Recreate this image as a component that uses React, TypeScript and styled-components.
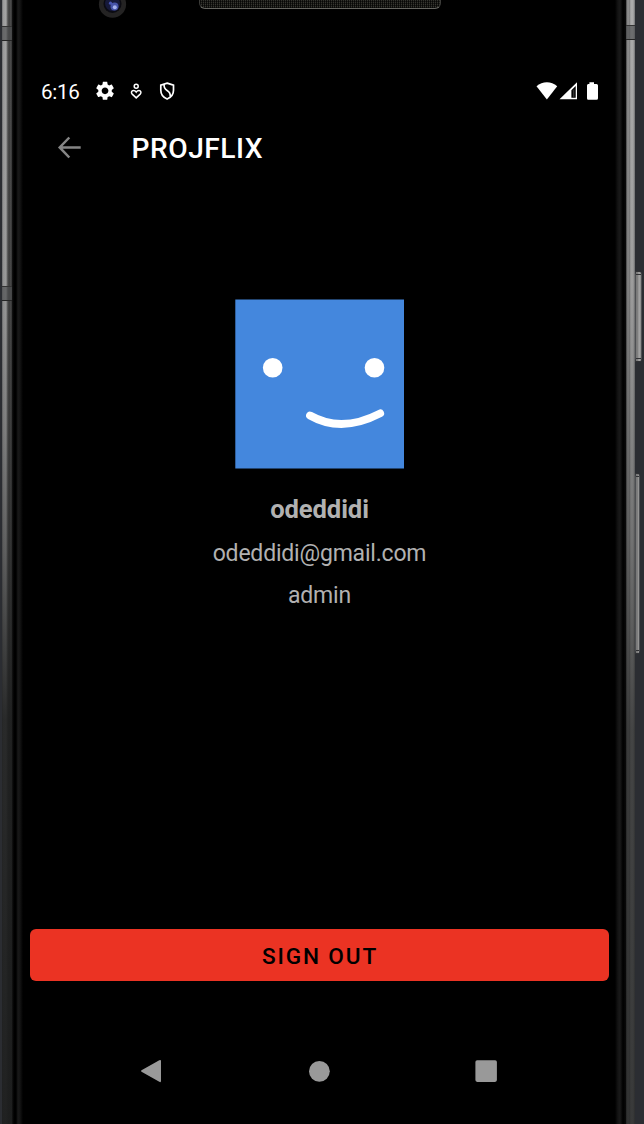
import React from 'react';
import styled, { createGlobalStyle } from 'styled-components';

const GlobalStyle = createGlobalStyle`
  * { box-sizing: border-box; }
  body { margin: 0; background: #292b2f; overflow: hidden; }
`;

const Device = styled.div`
  display: grid;
  grid-template-columns: 10px 614px 9px 9px;
  padding-left: 2px;
  width: 644px;
  height: 1124px;
  background: #2b2d32;
  font-family: Roboto, 'Noto Sans', sans-serif;
`;

const Rail = styled.div<{ $side: 'left' | 'right' }>`
  position: relative;
  background:
    ${({ $side }) =>
      $side === 'left'
        ? `linear-gradient(180deg, rgba(28, 29, 29, 0) 0%, rgba(28, 29, 29, 0.08) 25%, rgba(28, 29, 29, 0.27) 38%, rgba(28, 29, 29, 0.5) 49%, rgba(28, 29, 29, 0.72) 57%, rgba(28, 29, 29, 0.9) 64%, rgba(28, 29, 29, 0.97) 100%),
           linear-gradient(90deg, #66676a 0, #999 1px, #a6a6a6 4px, #777 5px, #4b4b4b 6px, #3d3d3d 8px, #585858 9px, #222 10px)`
        : `linear-gradient(180deg, rgba(28, 29, 29, 0) 0%, rgba(28, 29, 29, 0.1) 25%, rgba(28, 29, 29, 0.4) 48%, rgba(28, 29, 29, 0.72) 65%, rgba(28, 29, 29, 0.8) 100%),
           linear-gradient(90deg, #555 0, #606060 1px, #b0b0b0 2px, #6a6a6a 3px, #999 4px, #b1b1b1 6px, #999 8px, #66676a 9px)`};
`;

const AntennaBand = styled.i<{ $top: number }>`
  position: absolute;
  left: 0;
  right: 0;
  top: ${({ $top }) => $top}px;
  height: 15px;
  background: rgba(75, 77, 78, 0.65);
  border-top: 1px solid #333;
  border-bottom: 1px solid #252525;
`;

const Side = styled.div`
  display: flex;
  flex-direction: column;
  align-items: flex-start;
  padding-top: 271px;
`;

const HardwareKey = styled.div<{ $height: number; $width: number; $gap?: number }>`
  width: ${({ $width }) => $width}px;
  height: ${({ $height }) => $height}px;
  margin-top: ${({ $gap = 0 }) => $gap}px;
  border: 1px solid #4d4f52;
  border-top: 4px double #303134;
  border-bottom: 4px double #303134;
  border-radius: 0 3px 3px 0;
  background: linear-gradient(90deg, #777 0, #808080 2px, #aaa 3px, #888 5px);
`;

const Screen = styled.main`
  display: flex;
  flex-direction: column;
  min-width: 0;
  padding: 0 17px 0 18px;
  background: linear-gradient(90deg, #151515 0, #000 2px, #000 4px, #191919 6px, #141414 8px, #000 11px, #000 603px, #141414 606px, #191919 608px, #000 611px, #0a0a0a 614px);
`;

const Bezel = styled.div`
  display: flex;
  align-items: flex-start;
  height: 71px;
  padding-left: 68px;
`;

const Camera = styled.svg`
  display: block;
  width: 30px;
  height: 20px;
  margin-right: 71px;
`;

const Speaker = styled.div`
  width: 242px;
  height: 9px;
  border: solid #3c3c39;
  border-width: 0 1px 1px;
  border-bottom-color: #656560;
  border-radius: 0 0 6px 6px;
  background: repeating-linear-gradient(90deg, rgba(0, 0, 0, 0.7) 0 1px, transparent 1px 2px),
    repeating-linear-gradient(180deg, #35352f 0 1px, #1b1b18 1px 2px);
`;

const StatusBar = styled.div`
  display: flex;
  align-items: center;
  justify-content: space-between;
  height: 40px;
  padding: 0 10px 0 11px;
`;

const Notifications = styled.div`
  display: flex;
  align-items: center;
`;

const Clock = styled.time`
  width: 54px;
  font-size: 20.6px;
  line-height: 24px;
  letter-spacing: -0.3px;
  color: #fff;
  padding-top: 2px;
`;

const Glyph = styled.svg`
  display: block;
  flex: none;
`;

const AppBar = styled.header`
  display: flex;
  align-items: center;
  height: 74px;
  padding-left: 27px;
`;

const BackButton = styled.button`
  display: flex;
  width: 74.5px;
  padding: 0;
  border: 0;
  background: none;
`;

const Title = styled.h1`
  margin: 0;
  padding-top: 1px;
  font-size: 28.2px;
  line-height: 34px;
  letter-spacing: 0.5px;
  font-weight: 500;
  color: #fff;
`;

const Profile = styled.section`
  display: flex;
  flex: 1;
  flex-direction: column;
  align-items: center;
  padding-top: 114px;
`;

const ProfileLine = styled.p<{ $strong?: boolean }>`
  margin: 0;
  height: ${({ $strong }) => ($strong ? 45 : 42)}px;
  line-height: 42px;
  font-size: ${({ $strong }) => ($strong ? 25.6 : 23)}px;
  font-weight: ${({ $strong }) => ($strong ? 700 : 400)};
  letter-spacing: ${({ $strong }) => ($strong ? -0.1 : -0.2)}px;
  color: #b1b1b1;
`;

const Names = styled.div`
  display: flex;
  flex-direction: column;
  align-items: center;
  padding-top: 19px;
`;

const SignOut = styled.button`
  height: 52px;
  border: 0;
  border-radius: 6px;
  padding: 2px 0 0 1px;
  background: #eb3323;
  color: #000;
  font-family: inherit;
  font-size: 22.6px;
  font-weight: 500;
  letter-spacing: 1.85px;
`;

const NavigationBar = styled.nav`
  display: flex;
  align-items: center;
  justify-content: space-between;
  height: 143px;
  padding: 36px 112px 0 110px;
`;

export default function App() {
  return (
    <>
      <GlobalStyle />
      <Device>
        <Rail $side="left">
          <AntennaBand $top={26} />
          <AntennaBand $top={286} />
        </Rail>
        <Screen>
          <Bezel>
            <Camera viewBox="0 0 30 20">
              <circle cx="14.5" cy="4.2" r="13.6" fill="#242323" />
              <circle cx="14.5" cy="4" r="9" fill="#0b0b12" />
              <circle cx="14.5" cy="3.5" r="7.5" fill="#16193a" />
              <ellipse cx="16.5" cy="6.5" rx="4" ry="4" fill="#4653a8" />
              <circle cx="16.8" cy="7.3" r="2" fill="#a5b1ee" />
              <circle cx="12.5" cy="3.2" r="1.6" fill="#4653b0" />
            </Camera>
            <Speaker />
          </Bezel>
          <StatusBar>
            <Notifications>
              <Clock>6:16</Clock>
              <Glyph width="21" height="21" viewBox="1.3 1.5 22.4 22.4" fill="#fff">
                <path d="M19.14 12.94c.04-.3.06-.61.06-.94 0-.32-.02-.64-.07-.94l2.03-1.58c.18-.14.23-.41.12-.61l-1.92-3.32c-.12-.22-.37-.29-.59-.22l-2.39.96c-.5-.38-1.03-.7-1.62-.94l-.36-2.54c-.04-.24-.24-.41-.48-.41h-3.84c-.24 0-.43.17-.47.41l-.36 2.54c-.59.24-1.13.57-1.62.94l-2.39-.96c-.22-.08-.47 0-.59.22L2.74 8.87c-.12.21-.08.47.12.61l2.03 1.58c-.05.3-.09.63-.09.94s.02.64.07.94l-2.03 1.58c-.18.14-.23.41-.12.61l1.92 3.32c.12.22.37.29.59.22l2.39-.96c.5.38 1.03.7 1.62.94l.36 2.54c.05.24.24.41.48.41h3.84c.24 0 .44-.17.47-.41l.36-2.54c.59-.24 1.13-.56 1.62-.94l2.39.96c.22.08.47 0 .59-.22l1.92-3.32c.12-.22.07-.47-.12-.61l-2.01-1.58zM12 15.6c-1.98 0-3.6-1.62-3.6-3.6s1.62-3.6 3.6-3.6 3.6 1.62 3.6 3.6-1.62 3.6-3.6 3.6z" />
              </Glyph>
              <Glyph width="41" height="20" viewBox="0 0 41 20" fill="none" stroke="#fff" strokeWidth="1.5">
                <circle cx="20.2" cy="5.3" r="2" />
                <path d="M20.2 16.9L16.2 13.1C14.7 11.6 15.6 9.6 17.4 9.6C18.7 9.6 19.6 10.2 20.2 11.1C20.8 10.2 21.7 9.6 23 9.6C24.8 9.6 25.7 11.6 24.2 13.1Z" />
              </Glyph>
              <Glyph width="20" height="20" viewBox="0 0 20 20" fill="none" stroke="#fff" strokeWidth="1.7">
                <path d="M10.1 2.1L16.5 4.1V9.2C16.5 13.2 14 16.4 10.1 18C6.2 16.4 3.8 13.2 3.8 9.2V4.1Z" />
                <path d="M7.1 3.2C6.7 6.4 7.7 8 10.1 9.5C12.7 11.1 13.7 12.3 13.2 15.7" />
              </Glyph>
            </Notifications>
            <Glyph width="64" height="20" viewBox="0 0 64 20" fill="#fff">
              <path d="M1.5 5.2C7.5-.1 16.2-.1 22.2 5.2L11.9 18.5Z" />
              <path fillRule="evenodd" d="M42 1.2V18.2H24.5ZM40.7 5L36.4 9.3V16.8H40.7Z" />
              <path d="M37.9 9.2L39.4 7.7V16H37.9Z" opacity=".2" />
              <path d="M54.4 1.3H59V3H61.5Q63 3 63 4.5V17.2Q63 18.7 61.5 18.7H53.2Q52 18.7 52 17.2V4.5Q52 3 53.2 3H54.4Z" />
            </Glyph>
          </StatusBar>
          <AppBar>
            <BackButton aria-label="Back">
              <Glyph width="26" height="24" viewBox="0 0 26 24" fill="none" stroke="#858585" strokeWidth="2.5">
                <path d="M12.3 1.5L2.7 11.4L12.3 21.5M2.8 11.4H23.7" />
              </Glyph>
            </BackButton>
            <Title>PROJFLIX</Title>
          </AppBar>
          <Profile>
            <Glyph width="169" height="170" viewBox="0 0 169 170">
              <path d="M.3 .6H169V169.6H.3Z" fill="#4487dd" />
              <circle cx="37.7" cy="68.7" r="9.8" fill="#fff" />
              <circle cx="139.5" cy="68.7" r="9.8" fill="#fff" />
              <path d="M75 116.5Q106.5 134.5 145.2 114.4" fill="none" stroke="#fff" strokeWidth="7.8" strokeLinecap="round" />
            </Glyph>
            <Names>
              <ProfileLine $strong>odeddidi</ProfileLine>
              <ProfileLine>odeddidi@gmail.com</ProfileLine>
              <ProfileLine>admin</ProfileLine>
            </Names>
          </Profile>
          <SignOut>SIGN OUT</SignOut>
          <NavigationBar>
            <Glyph width="22" height="24" viewBox="0 0 22 24" fill="#999">
              <path d="M19.3 1.2Q21 .3 21 2V22Q21 23.8 19.3 22.8L1.5 12.7Q.5 12 1.5 11.3Z" />
            </Glyph>
            <Glyph width="22" height="22" viewBox="0 0 22 22" fill="#999">
              <circle cx="11.4" cy="11.3" r="10.4" />
            </Glyph>
            <Glyph width="22" height="22" viewBox="0 0 22 22" fill="#999">
              <rect x=".4" y=".2" width="21.5" height="21.7" rx="1.8" />
            </Glyph>
          </NavigationBar>
        </Screen>
        <Rail $side="right">
          <AntennaBand $top={25} />
        </Rail>
        <Side>
          <HardwareKey $height={91} $width={7} />
          <HardwareKey $height={181} $width={5} $gap={111} />
        </Side>
      </Device>
    </>
  );
}
